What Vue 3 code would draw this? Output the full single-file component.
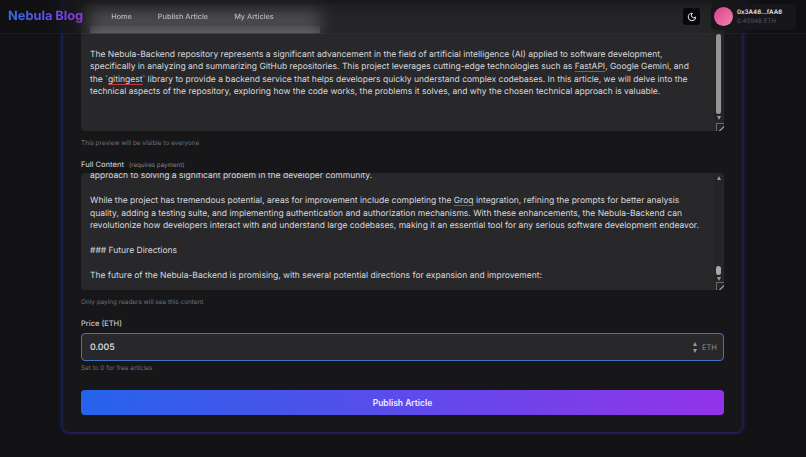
<template>
  <div class="page">
    <header class="nav">
      <div class="nav-left">
        <span class="logo">Nebula Blog</span>
        <nav class="links">
          <a v-for="l in links" :key="l" class="link">{{ l }}</a>
        </nav>
      </div>
      <div class="nav-right">
        <button class="theme-btn">
          <svg width="10" height="10" viewBox="0 0 24 24" fill="none" stroke="#e6e6e6" stroke-width="2.4" stroke-linecap="round" stroke-linejoin="round">
            <path d="M12 3a6 6 0 0 0 9 9 9 9 0 1 1-9-9Z" />
          </svg>
        </button>
        <div class="wallet">
          <span class="avatar"></span>
          <div class="wallet-text">
            <div class="addr">0x3A46...fAA6</div>
            <div class="bal">0.45948 ETH</div>
          </div>
        </div>
      </div>
    </header>

    <main class="main">
      <form class="card" @submit.prevent>
        <div class="area preview-area">
          <div class="under-nav"><span></span><span></span></div>
          <div class="area-text">
            <p>The Nebula-Backend repository represents a significant advancement in the field of artificial intelligence (AI) applied to software development, specifically in analyzing and summarizing GitHub repositories. This project leverages cutting-edge technologies such as <u>FastAPI</u>, Google Gemini, and the `<u>gitingest</u>` library to provide a backend service that helps developers quickly understand complex codebases. In this article, we will delve into the technical aspects of the repository, exploring how the code works, the problems it solves, and why the chosen technical approach is valuable.</p>
          </div>
          <div class="scrollbar">
            <span class="thumb thumb-long"></span>
            <span class="arrow down"></span>
          </div>
          <span class="grip"></span>
        </div>
        <p class="hint">This preview will be visible to everyone</p>

        <label class="label full-label">Full Content <small>(requires payment)</small></label>
        <div class="area content-area">
          <div class="area-text scrolled">
            <p>approach to solving a significant problem in the developer community.</p>
            <p>While the project has tremendous potential, areas for improvement include completing the <u>Groq</u> integration, refining the prompts for better analysis quality, adding a testing suite, and implementing authentication and authorization mechanisms. With these enhancements, the Nebula-Backend can revolutionize how developers interact with and understand large codebases, making it an essential tool for any serious software development endeavor.</p>
            <p>### Future Directions</p>
            <p>The future of the Nebula-Backend is promising, with several potential directions for expansion and improvement:</p>
          </div>
          <div class="scrollbar">
            <span class="arrow up"></span>
            <span class="thumb thumb-short"></span>
            <span class="arrow down"></span>
          </div>
          <span class="grip"></span>
        </div>
        <p class="hint">Only paying readers will see this content</p>

        <label class="label price-label">Price (ETH)</label>
        <div class="price">
          <span class="price-value">0.005</span>
          <span class="spinner"><i class="arrow up"></i><i class="arrow down"></i></span>
          <span class="unit">ETH</span>
        </div>
        <p class="hint price-hint">Set to 0 for free articles</p>

        <button class="publish">Publish Article</button>
      </form>
    </main>
  </div>
</template>

<script setup>
const links = ['Home', 'Publish Article', 'My Articles']
</script>

<style>
html, body { margin: 0; background: #121214; }
</style>

<style scoped>
.page {
  position: relative;
  height: 457px; overflow: hidden;
  background: #121214;
  font-family: Inter, "Liberation Sans", sans-serif;
  color: #d8d8dc;
  text-rendering: geometricPrecision;
}

.nav {
  position: absolute; top: 0; left: 0; right: 0; z-index: 5;
  height: 34px; box-sizing: border-box;
  display: flex; align-items: center; justify-content: space-between;
  padding: 0 10px 0 8px;
  background: rgba(18,18,20,0.12);
  backdrop-filter: blur(8px);
  border-bottom: 1px solid rgba(255,255,255,0.04);
}
.nav-left { display: flex; align-items: center; }
.logo {
  font-size: 12.8px; font-weight: 700;
  background: linear-gradient(90deg, #2f6fe8, #9333ea);
  -webkit-background-clip: text; background-clip: text; color: transparent;
}
.links { display: flex; gap: 26px; margin-left: 28px; }
.link { font-size: 7.3px; font-weight: 500; color: #b9b9be; }

.nav-right { display: flex; align-items: center; gap: 11px; }
.theme-btn {
  width: 17px; height: 17px; padding: 0; border: 0; border-radius: 3px;
  background: #08080a;
  display: flex; align-items: center; justify-content: center;
}
.wallet {
  width: 85px; height: 26px; box-sizing: border-box;
  display: flex; align-items: center; gap: 4px;
  padding: 0 3px;
  background: #17171b; border-radius: 5px;
}
.avatar {
  width: 19px; height: 19px; border-radius: 50%; flex-shrink: 0;
  background: linear-gradient(135deg, #dc3f8b, #ee86b0);
}
.wallet-text { line-height: 9px; }
.addr { font-size: 6.2px; font-weight: 600; color: #e0e0e4; }
.bal { font-size: 6.2px; color: #55555c; }

.main { display: flex; justify-content: center; }
.card {
  width: 679px; height: 442px; box-sizing: border-box;
  margin-top: -10px; margin-right: 1px;
  padding: 15px 18px 0;
  background: #17171a;
  border-radius: 0 0 6px 6px;
  box-shadow: -2px 0 4px rgba(37,80,200,0.28), 2px 0 4px rgba(124,58,237,0.28), 0 2px 4px rgba(70,60,190,0.22);
  display: flex; flex-direction: column;
}

.area {
  position: relative; overflow: hidden;
  background: #28282b;
  border-radius: 4px;
  box-sizing: border-box;
}
.preview-area { height: 126px; }
.content-area { height: 117px; }
.under-nav { padding: 8px 0 0 9px; height: 34.5px; box-sizing: border-box; }
.under-nav span {
  display: block; width: 230px; height: 7px; margin-bottom: 6px;
  background: #77777a;
}
.area-text {
  padding: 0 21px 0 9px;
  font-size: 8.5px; line-height: 12.55px; color: #dadade;
}
.area-text p { margin: 0 0 12.55px; }
.preview-area .area-text { padding-top: 9px; }
.area-text.scrolled { margin-top: -3px; }
.area-text u {
  text-decoration: underline solid #c83c3c;
  text-decoration-thickness: 0.7px;
  text-underline-offset: 1.5px;
}

.scrollbar {
  position: absolute; top: 0; right: 1px; bottom: 9px; width: 9px;
  background: #252527;
  display: flex; flex-direction: column; align-items: center;
}
.thumb { display: block; width: 5px; border-radius: 3px; background: #959595; }
.thumb-long { height: 80px; margin-top: 29px; }
.thumb-short { height: 9px; margin-top: auto; background: #a8a8a8; }
.arrow {
  display: block; width: 0; height: 0;
  border-left: 2.5px solid transparent; border-right: 2.5px solid transparent;
}
.arrow.up { border-bottom: 4px solid #9a9a9a; margin-top: 3px; }
.arrow.down { border-top: 4px solid #9a9a9a; margin-top: 2px; }
.grip {
  position: absolute; right: 0; bottom: 0;
  width: 8px; height: 8px; box-sizing: border-box;
  border-top: 1px solid #6a6a6a; border-left: 1px solid #6a6a6a;
  background: linear-gradient(135deg, #242426 62%, #8a8a8a 62%, #8a8a8a 72%, #242426 72%);
}

.hint { margin: 8px 0 0; font-size: 6.4px; line-height: 9px; color: #707076; }
.label { font-size: 7.5px; font-weight: 500; color: #c6c6ca; line-height: 10px; }
.label small { font-size: 6.2px; font-weight: 400; color: #88888e; margin-left: 3px; }
.full-label { margin-top: 12px; margin-bottom: 2px; }
.price-label { margin-top: 12px; margin-bottom: 4px; }

.price {
  height: 28px; box-sizing: border-box;
  display: flex; align-items: center;
  padding: 0 6px 0 8px;
  background: #28282b;
  border: 1.6px solid #4273bd; border-radius: 4px;
}
.price-value { font-size: 8.8px; font-weight: 500; color: #e4e4e8; flex: 1; }
.spinner { display: flex; flex-direction: column; gap: 3px; margin-right: 5px; }
.spinner .arrow { margin: 0; }
.unit { font-size: 7.6px; color: #8c8c90; }
.price-hint { margin-top: 3px; }

.publish {
  margin-top: 17px; height: 25px; padding: 0;
  border: 0; border-radius: 4px;
  background: linear-gradient(90deg, #2563eb, #9333ea);
  color: #f0ecff;
  font-family: inherit; font-size: 8.5px; font-weight: 600;
}
</style>
